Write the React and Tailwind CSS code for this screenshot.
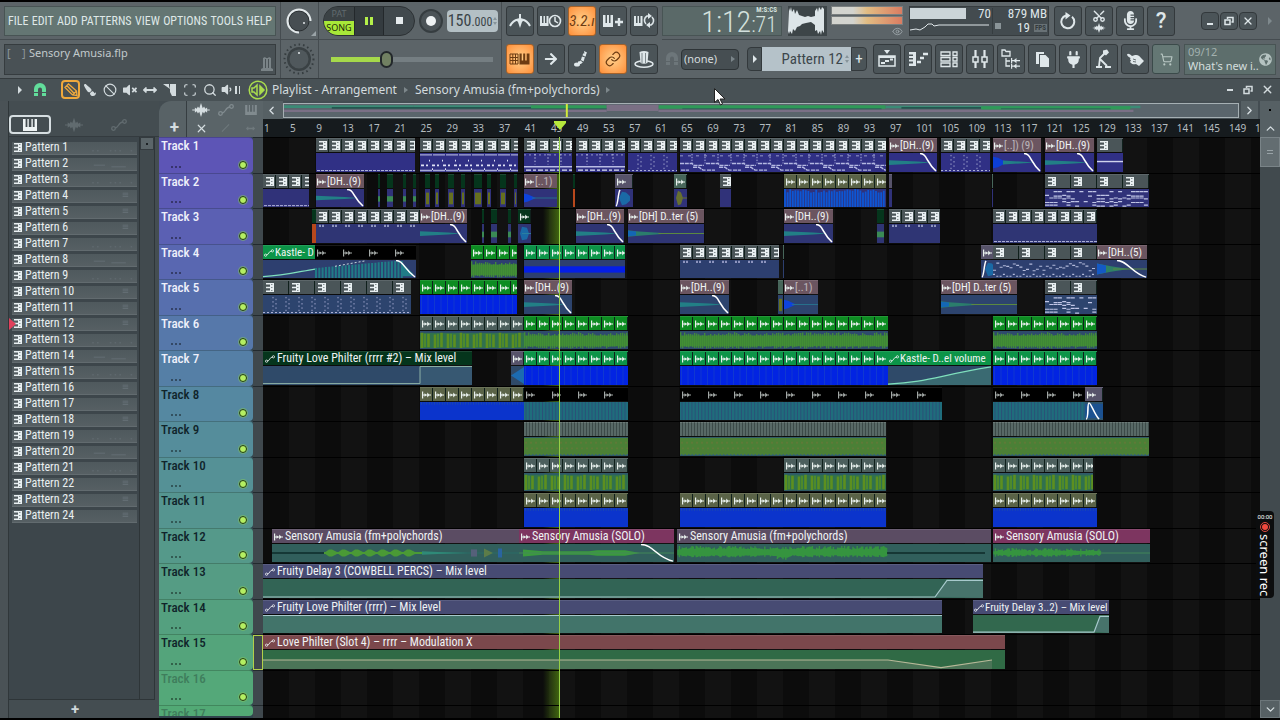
import React from "react";
import { Ban, Search, Scan, Link, ShoppingCart, Scissors, X, ChevronLeft, ChevronRight, ChevronUp, ChevronDown, Eye } from "lucide-react";
import { FaMicrophoneAlt, FaPlug, FaVolumeMute, FaPaintBrush, FaArrowRight, FaArrowsAltH, FaVolumeDown, FaGlobeAmericas } from "react-icons/fa";

const ORIGIN = 263;
const BAR = 6.52;

/* ---------- icons ---------- */
const Piano = ({ className = "h-3 w-3.5" }) => (
  <svg viewBox="0 0 14 12" className={className} fill="currentColor">
    <path d="M0 0h2.600v8h1.800V0h1.400v8h2.600V0h1.400v8h1.800V0H14v12H0z" />
  </svg>
);
const Wave = ({ className = "h-4 w-5" }) => (
  <svg viewBox="0 0 20 16" className={className} fill="currentColor">
    <path d="M0 7.500h3V5l2 1.500L6.500 4 8 6l2-6 2 6 1.500-2L15 6.500 17 5v2.500h3v1h-3V11l-2-1.500-1.500 2.500L12 10l-2 6-2-6-1.500 2L5 9.500 3 11V8.500H0z" />
  </svg>
);
const Auto = ({ className = "h-3 w-4" }) => (
  <svg viewBox="0 0 16 12" className={className} fill="none" stroke="currentColor" strokeWidth="1.300">
    <circle cx="2.500" cy="9.500" r="1.800" />
    <circle cx="13.500" cy="2.500" r="1.800" />
    <path d="M4 9c4 0 3-6 8-6" />
  </svg>
);
const PatIcon = () => (
  <svg viewBox="0 0 9 9" className="h-[9px] w-[9px] shrink-0">
    <path d="M1 0h8v9H1V7.500h4V5.200H1V3.800h4V1.500H1z" fill="#e9f0f2" />
    <path d="M6 1.500h1.500M6 4.500h1.500M6 7.500h1.500" stroke="#6d787c" strokeWidth="0.800" />
  </svg>
);
const AudIcon = () => (
  <svg viewBox="0 0 9 8" className="h-2 w-[9px] shrink-0" fill="#e9f1ee">
    <path d="M0 0.500h1.200v7H0zM1 3.500h8v1H1zM2.500 2.200L5 4 2.500 5.800zM5.200 1.500L7.700 4 5.200 6.500z" />
  </svg>
);
const Pencil = () => (
  <svg viewBox="0 0 14 14" className="h-3.5 w-3.5" fill="none" stroke="currentColor" strokeWidth="1.300">
    <path d="M1 4.500 4.500 1l8 7 .5 4.500-4.500-.5zM3 2.800l7 7.500M8.500 12l4-4" />
  </svg>
);
const Magnet = ({ className = "h-3.5 w-3.5" }) => (
  <svg viewBox="0 0 14 14" className={className} fill="currentColor">
    <path d="M1 9V6a6 6 0 0 1 12 0v3H9V6.500a2 2 0 0 0-4 0V9zM1 10h4v3H1zM9 10h4v3H9z" />
  </svg>
);
const Restore = () => (
  <svg viewBox="0 0 10 10" className="h-2.5 w-2.5" fill="none" stroke="currentColor" strokeWidth="1.500">
    <path d="M1 4h5v4.500H1zM3.500 3V1.500H9V6H7.500" />
  </svg>
);
const Spin = () => (
  <span className="ml-px flex flex-col gap-0.5">
    <span className="border-x-2 border-b-[3px] border-x-transparent border-b-[#87949a]" />
    <span className="border-x-2 border-t-[3px] border-x-transparent border-t-[#87949a]" />
  </span>
);
const glyphs = {
  metro: (
    <>
      <path d="M1 15c2-4 5-6 8-6.500M21 15c-2-4-5-6-8-6.500" fill="none" stroke="currentColor" strokeWidth="2" />
      <path d="M10 3h2v4l3 2-2 2-2 6-2-6-2-2 3-2z" fill="currentColor" />
    </>
  ),
  wait: (
    <>
      <path d="M0 5h2v7h1.500V5H5v7h1.500V5h2v10H0z" fill="currentColor" />
      <circle cx="15" cy="10" r="5.500" fill="none" stroke="currentColor" strokeWidth="1.600" />
      <path d="M15 6v4l3 2" fill="none" stroke="currentColor" strokeWidth="1.500" />
    </>
  ),
  plus: (
    <>
      <path d="M1 4h2.500v8H5V4h2v8h1.500V4H11v12H1z" fill="currentColor" />
      <path d="M13 11h8M17 7v8" stroke="currentColor" strokeWidth="2.400" />
    </>
  ),
  loop: (
    <>
      <path d="M1 5h2v7h1.500V5H6v7h1.500V5h2v10H1z" fill="currentColor" />
      <path d="M13 13a5 5 0 0 1 1-8h2M19 6a5 5 0 0 1-1 8h-2" fill="none" stroke="currentColor" strokeWidth="1.600" />
      <path d="M15 2l4 3-4 3zM17 11l-4 3 4 3z" fill="currentColor" />
    </>
  ),
  keys: (
    <>
      <path d="M1 5h8v10H1zM1 8.500h8M1 11.500h8M3.800 5v10M6.500 5v10" fill="none" stroke="currentColor" strokeWidth="1" />
      <path d="M10.500 4.500h2.200v7h1.500v-7h2v7h1.500v-7h2.800v11h-10z" fill="currentColor" />
    </>
  ),
  slide: (
    <>
      <ellipse cx="6" cy="15.500" rx="3" ry="2" fill="currentColor" />
      <path d="M7 14c6 0 4-6 7-9" fill="none" stroke="currentColor" strokeWidth="3" strokeDasharray="4 1" />
      <path d="M13 2l3 1.500L14 8z" fill="currentColor" />
    </>
  ),
  hat: (
    <>
      <ellipse cx="11" cy="15" rx="9" ry="3.200" fill="none" stroke="currentColor" strokeWidth="1.600" />
      <path d="M6.500 3c3-1.500 6-1.500 9 0l-1 11c-2 1-5 1-7 0z" fill="currentColor" />
      <path d="M9 4v10M12.500 4v10" stroke="#7d878b" strokeWidth="1" />
    </>
  ),
  playlist: (
    <>
      <path d="M3 7h16v10H3z" fill="none" stroke="currentColor" strokeWidth="1.500" />
      <path d="M3 8h16M5 14h4M9 12h4M14 10.500h3" stroke="currentColor" strokeWidth="2" />
      <path d="M8 1h6l-3 4z" fill="currentColor" />
    </>
  ),
  roll: (
    <>
      <path d="M2 3h7v14H2v-2.500h4v-2H2v-2h4v-1.500H2V7h4V5.500H2z" fill="currentColor" />
      <path d="M10 13h4M13 9h4M16 5h5" stroke="currentColor" strokeWidth="2.500" />
    </>
  ),
  rack: <path d="M3 3h9v3.500H3zM3 8.500h9V12H3zM3 14h9v3.500H3zM15 3h4v3.500h-4zM15 8.500h4V12h-4zM15 14h4v3.500h-4z" fill="none" stroke="currentColor" strokeWidth="1.300" />,
  mixer: (
    <>
      <path d="M6.500 1v18M15.500 1v18" stroke="currentColor" strokeWidth="2.200" />
      <path d="M4 8h5v5H4zM13 8h5v5h-5z" fill="#4a5357" stroke="currentColor" strokeWidth="1.500" />
    </>
  ),
  browser: (
    <>
      <path d="M2 1h3l1 1.500h4V7H2zM6 9v8h4M6 12h4" fill="none" stroke="currentColor" strokeWidth="1.300" />
      <path d="M11 9h1.200v2H14l2.500-2v2H20v1.200h-3.500v2L14 12.200h-1.800v2H11zM11 14.800h1.200v1.700H14l2.500-2v2H20v1.200h-3.500v2L14 17.700h-1.800v2H11z" fill="currentColor" />
    </>
  ),
  docs: <path d="M5 3h8v2H8v10H5zM9 6h5.500L18 9.500V18H9z" fill="currentColor" />,
  tempo: (
    <>
      <path d="M10 1.500l4-1 2 3-3 3-3-2z" fill="currentColor" />
      <path d="M12 4 7 9l-1 8M7 10l7 7" fill="none" stroke="currentColor" strokeWidth="1.800" />
      <path d="M3 18h6M12 18h6" stroke="currentColor" strokeWidth="1.800" />
    </>
  ),
  undo: (
    <>
      <path d="M9 4.500a6.500 6.500 0 1 0 6 1.300" fill="none" stroke="currentColor" strokeWidth="2" />
      <path d="M8.500 1v7.500L13.500 4.500z" fill="currentColor" />
    </>
  ),
  touch: (
    <>
      <path d="M3 5.500c1-1.500 2.500-.5 5 1.500l3-1c3-.5 5 1 6 3l3 3-5 5-3-2c-2 .5-4 .3-5-1l-1-1 1-1.500-1-1 .5-1.500C5 8 3 7 3 5.500z" fill="currentColor" />
      <path d="M9 10l3 1M9 12.500l3 .5" stroke="#4b5458" strokeWidth="0.800" />
    </>
  ),
};
const G = ({ name }) => (
  <svg viewBox="0 0 22 20" className="h-5 w-[22px]">
    {glyphs[name]}
  </svg>
);

const Tool = ({ label, on, dim, children }) => (
  <button
    aria-label={label}
    className={
      "flex h-[30px] w-7 shrink-0 items-center justify-center rounded-[3px] border " +
      (on
        ? "border-[#a5622a] bg-radial from-[#ffd08a] to-[#ff8e35] text-[#6d3c12]"
        : dim
          ? "border-[#3b4a4a] bg-[#647774] text-[#b9c8c4]"
          : "border-[#33393c] bg-[#4b5458] text-[#dfe7ea]")
    }
  >
    {children}
  </button>
);

/* ---------- header ---------- */
const Header = () => (
  <header className="flex shrink-0 border-t-2 border-b border-t-black border-b-[#353b3e] bg-[#5c6468] font-['Roboto_Condensed','Roboto',sans-serif]">
    <div className="flex w-[281px] shrink-0 flex-col border-r border-[#454c50]">
      <div className="flex h-[38px] items-center border-b border-[#454c50] px-1">
        <nav className="flex h-[30px] w-full items-center justify-between border border-[#485454] bg-[#647673] px-[3px] text-[12px] text-[#dfe8e7]">
          {["FILE", "EDIT", "ADD", "PATTERNS", "VIEW", "OPTIONS", "TOOLS", "HELP"].map((m) => (
            <button key={m} className="shrink-0">{m}</button>
          ))}
        </nav>
      </div>
      <div className="flex h-[38px] items-center px-1">
        <div className="flex h-[31px] w-full items-start border border-[#363c3f] bg-[#495155] pl-0.5 font-['Noto_Sans',sans-serif] text-[11px] leading-4 text-[#c1c9cc]">
          <span className="w-[22px] whitespace-pre text-[#8d979b]">{"[    ]"}</span>
          <span>Sensory Amusia.flp</span>
          <svg viewBox="0 0 12 14" className="mt-3 mr-0.5 ml-auto h-3.5 w-3" fill="#7a8387">
            <path d="M2 1l2-1 1 1h2l1-1 2 1v10l2 1v2H0v-2l2-1z" />
            <path d="M4.500 2v9M7.500 2v9" stroke="#495155" />
          </svg>
        </div>
      </div>
    </div>
    <div className="flex w-[38px] shrink-0 flex-col border-r border-[#454c50]">
      <div className="flex h-[38px] items-center justify-center border-b border-[#454c50]">
        <svg viewBox="0 0 34 34" className="h-[34px] w-[34px]">
          <circle cx="16" cy="17" r="10" fill="#474e52" stroke="#2b3033" />
          <path d="M16 28.500A11.500 11.500 0 1 1 27.500 17" fill="none" stroke="#e3e9eb" strokeWidth="2" />
          <circle cx="21" cy="19" r="1" fill="#e3e9eb" />
          <path d="M33 27v5h-5z" fill="#9aa3a7" />
        </svg>
      </div>
      <div className="flex h-[38px] items-center justify-center">
        <svg viewBox="0 0 34 34" className="h-[34px] w-[34px]">
          <circle cx="16" cy="17" r="14.500" fill="none" stroke="#353c3f" strokeWidth="2" strokeDasharray="1.500 3" />
          <circle cx="16" cy="17" r="12" fill="#3a4144" />
          <circle cx="16" cy="17" r="9.500" fill="#50585c" />
          <circle cx="16" cy="11" r="1" fill="#e3e9eb" />
        </svg>
      </div>
    </div>
    <div className="flex w-[183px] shrink-0 flex-col border-r border-[#454c50]">
      <div className="flex h-[38px] items-center border-b border-[#454c50] pl-1">
        <div className="flex h-[30px] w-[92px] overflow-hidden rounded-[15px] border border-[#2c3134] bg-[#41494d]">
          <button className="flex w-[30px] flex-col text-center font-['Noto_Sans',sans-serif] text-[9px] leading-[14px]">
            <span className="bg-[#3b4245] text-[#606a6e]">PAT</span>
            <span className="flex-1 bg-[#a8e838] text-[#1d2a08]">SONG</span>
          </button>
          <button aria-label="Pause" className="flex w-[30px] items-center justify-center gap-0.5 border-x border-[#23282b] bg-[#343b3f]">
            <span className="h-2 w-[3px] bg-[#b4ef4a]" />
            <span className="h-2 w-[3px] bg-[#b4ef4a]" />
          </button>
          <button aria-label="Stop" className="flex flex-1 items-center justify-center">
            <span className="h-[7px] w-[7px] bg-[#e6ecee]" />
          </button>
        </div>
        <button aria-label="Record" className="ml-1 flex h-6 w-6 items-center justify-center rounded-full border-2 border-[#363d40] bg-[#4b5357]">
          <span className="h-2.5 w-2.5 rounded-full bg-[#eef2f3]" />
        </button>
        <button aria-label="Tempo" className="ml-1 flex h-[22px] w-[51px] items-center justify-center rounded bg-[#b4c0c5] text-[#3b4448]">
          <span className="flex items-baseline">
            <span className="text-[16px] leading-[22px]">150</span>
            <span className="text-[12px]">.000</span>
          </span>
          <Spin />
        </button>
      </div>
      <div className="flex h-[38px] items-center pl-3">
        <input
          type="range"
          aria-label="Main volume"
          defaultValue="33"
          className="h-[5px] w-[162px] appearance-none bg-linear-to-r from-[#a6d94b] from-33% to-[#757e82] to-33% [&::-webkit-slider-thumb]:h-[17px] [&::-webkit-slider-thumb]:w-[13px] [&::-webkit-slider-thumb]:appearance-none [&::-webkit-slider-thumb]:rounded-full [&::-webkit-slider-thumb]:border-2 [&::-webkit-slider-thumb]:border-[#23282b] [&::-webkit-slider-thumb]:bg-[#718062]"
        />
      </div>
    </div>
    <div className="grid shrink-0 grid-cols-5 grid-rows-2 items-center gap-x-[3px] px-1">
      <Tool label="Metronome"><G name="metro" /></Tool>
      <Tool label="Wait for input"><G name="wait" /></Tool>
      <Tool label="Countdown" on><span className="text-[15px] italic">3.2.ı</span></Tool>
      <Tool label="Overdub"><G name="plus" /></Tool>
      <Tool label="Loop recording"><G name="loop" /></Tool>
      <Tool label="Typing keyboard" on><G name="keys" /></Tool>
      <Tool label="Step"><FaArrowRight size={14} /></Tool>
      <Tool label="Slide"><G name="slide" /></Tool>
      <Tool label="Link" on><Link size={16} strokeWidth={1.8} /></Tool>
      <Tool label="Hat"><G name="hat" /></Tool>
    </div>
    <div className="flex min-w-0 flex-1 flex-col">
      <div className="flex h-[38px] items-center border-b border-[#454c50]">
        <div className="flex h-[30px] w-[120px] shrink-0 items-start justify-end border border-[#485454] bg-[#5a6968] pr-1 text-[#d3e0dd]">
          <span className="text-[30px] leading-[29px] font-light">1:12</span>
          <span className="flex flex-col items-end">
            <span className="text-[7px] leading-[7px] font-bold">M:S:CS</span>
            <span className="text-[22px] leading-[22px] font-light">:71</span>
          </span>
        </div>
        <svg viewBox="0 0 39 30" className="ml-1.5 h-[30px] w-[39px] shrink-0 bg-[#3d4548]">
          <path d="M1 2l1 3 1-4 1 5 2-3 1 5 2-4 2 5 3 1 3 1 3-1 3 1 4-1V5l2-3 1 4 1-5 2 3 1-3 2 2v24l-2-3-1 5-1-4-2 3-1-4-2 1v-6l-4-3-5 1-4 1-2 2-3 1-2 4-2-2-1 5-2-3-1 3-1-3z" fill="#dde5e8" />
        </svg>
        <div className="ml-1 flex w-[72px] shrink-0 flex-col gap-px self-start pt-1">
          <span className="h-[9px] border border-[#7a7f7f] bg-linear-to-r from-[#d3d4cf] from-30% via-[#e2bd83] to-[#d97c62]" />
          <span className="h-[9px] border border-[#7a7f7f] bg-linear-to-r from-[#d3d4cf] from-30% via-[#e2bd83] to-[#d97c62]" />
          <Eye size={11} className="ml-auto text-[#9aa3a7]" />
        </div>
        <div className="ml-1.5 flex h-[30px] w-[140px] shrink-0 border border-[#363c3f] bg-[#434b4f] text-[13px] leading-[14px] whitespace-nowrap text-[#dfe6e9]">
          <svg viewBox="0 0 84 28" className="h-7 w-[84px] shrink-0">
            <rect y="1" width="56" height="11" fill="#cbd4d8" />
            <path d="M0 23l6-1 4 1 5-3 3-3h4l2 2 5-1h50" fill="none" stroke="#dfe6e9" />
            <rect x="82" y="1" width="1" height="26" fill="#363d40" />
          </svg>
          <span className="-ml-4 w-4">70</span>
          <span className="mt-4 ml-px h-1.5 w-1.5 bg-[#8a9498]" />
          <span className="ml-auto flex flex-col items-end pr-px">
            <span>879 MB</span>
            <span className="flex items-center gap-1">
              19 <span className="bg-[#697276] px-px text-[7px] leading-2 font-bold text-[#343b3e]">FPS</span>
            </span>
          </span>
        </div>
        <div className="ml-[5px] flex shrink-0 gap-[3px]">
          <Tool label="Undo"><G name="undo" /></Tool>
          <Tool label="Cut">
            <span className="flex flex-col items-center">
              <Scissors size={14} strokeWidth={2.4} className="-rotate-90" />
              <Wave className="h-2.5 w-4" />
            </span>
          </Tool>
          <Tool label="Record audio"><FaMicrophoneAlt size={19} /></Tool>
          <Tool label="Help"><span className="font-['Roboto',sans-serif] text-[22px] leading-6 font-medium">?</span></Tool>
        </div>
        <div className="mr-2 ml-auto flex items-center gap-px text-[#dfe7ea]">
          <button aria-label="Minimize" className="flex h-[18px] w-[18px] items-end justify-center rounded-sm border border-[#33393c] bg-[#4b5458] pb-1"><span className="h-0.5 w-1.5 bg-current" /></button>
          <button aria-label="Restore" className="flex h-[18px] w-[18px] items-center justify-center rounded-sm border border-[#33393c] bg-[#4b5458]"><Restore /></button>
          <button aria-label="Close" className="flex h-[18px] w-[18px] items-center justify-center rounded-sm border border-[#33393c] bg-[#4b5458]"><X size={12} strokeWidth={2.5} /></button>
          <span className="ml-2.5 border-y-4 border-l-4 border-y-transparent border-l-[#7f898d]" />
        </div>
      </div>
      <div className="flex h-[38px] items-center">
        <Magnet className="ml-[3px] h-3.5 w-3.5 shrink-0 text-[#6d767a]" />
        <label className="relative ml-0.5 flex shrink-0 items-center">
          <select aria-label="Channel filter" className="h-[21px] w-[58px] appearance-none rounded-sm border border-[#2e3437] bg-[#464e52] pl-0.5 font-['Noto_Sans',sans-serif] text-[11px] text-[#d5dcdf]">
            <option>(none)</option>
          </select>
          <span className="absolute right-1 border-y-[3px] border-l-4 border-y-transparent border-l-[#7b858a]" />
        </label>
        <button aria-label="Pattern menu" className="ml-2 flex h-6 w-[15px] shrink-0 items-center justify-center rounded-l-sm border border-[#33393c] bg-[#4b5458]">
          <span className="border-y-4 border-l-4 border-y-transparent border-l-[#dfe7ea]" />
        </button>
        <button className="flex h-6 w-[89px] shrink-0 items-center justify-end gap-px bg-[#b5c2c9] pr-0.5 text-[15px] text-[#3d474c]">
          Pattern 12
          <Spin />
        </button>
        <button className="flex h-6 w-4 shrink-0 items-center justify-center rounded-r-sm border border-[#33393c] bg-[#4b5458] text-[15px] text-[#dfe7ea]">+</button>
        <div className="ml-1.5 flex shrink-0 gap-[3px]">
          {["playlist", "roll", "rack", "mixer", "browser", "docs"].map((n) => (
            <Tool key={n} label={n}><G name={n} /></Tool>
          ))}
          <Tool label="plugin"><FaPlug size={17} /></Tool>
          <Tool label="tempo tap"><G name="tempo" /></Tool>
          <Tool label="touch"><G name="touch" /></Tool>
          <Tool label="shop" dim><ShoppingCart size={13} /></Tool>
        </div>
        <a href="#news" className="mr-1 ml-1 flex h-[31px] min-w-0 flex-1 items-center justify-between border border-[#485454] bg-[#5d6e6c] px-[3px] font-['Noto_Sans',sans-serif] text-[11px] leading-[14px]">
          <span className="flex flex-col whitespace-nowrap">
            <span className="text-[#a3b1af]">09/12</span>
            <span className="text-[#d4dedd]">What's new i..</span>
          </span>
          <FaGlobeAmericas size={13} className="shrink-0 text-[#b5c3c1]" />
        </a>
      </div>
    </div>
  </header>
);

const TitleBar = () => (
  <div className="flex h-[22px] shrink-0 items-center bg-[#485155] pr-1.5 pb-px pl-[18px] font-['Noto_Sans',sans-serif] text-[12px] text-[#d3dbde]">
    <span className="border-y-4 border-l-4 border-y-transparent border-l-current" />
    <button aria-label="Snap" className="ml-[11px] text-[#62dd9b]"><Magnet /></button>
    <button aria-label="Draw" className="ml-3.5 flex h-[19px] w-[19px] items-center justify-center rounded border-2 border-[#f0a93c] text-[#f0a93c]"><Pencil /></button>
    <div className="flex items-center">
      {[
        ["Paint", <FaPaintBrush size={12} className="-scale-x-100" />],
        ["Delete", <Ban size={14} strokeWidth={2} />],
        ["Mute", <FaVolumeMute size={14} />],
        ["Slip", <FaArrowsAltH size={14} />],
        ["Slice", <svg viewBox="0 0 14 14" className="h-3.5 w-3.5" fill="currentColor"><path d="M0 1h6v2l1 3zM7 1h6v12H9L7 9z" /></svg>],
        ["Select", <Scan size={14} />],
        ["Zoom", <Search size={14} strokeWidth={2.2} />],
        ["Playback", <span className="flex items-center gap-0.5"><FaVolumeDown size={13} /><span className="h-2 w-0.5 bg-current" /><span className="h-2 w-px bg-current" /></span>],
      ].map(([n, i]) => (
        <button key={n} aria-label={n} className="flex w-5 shrink-0 justify-center">{i}</button>
      ))}
    </div>
    <svg viewBox="0 0 20 20" className="mr-1 ml-2 h-5 w-5 shrink-0" fill="none" stroke="#a9dc4e" strokeWidth="1.500">
      <circle cx="10" cy="10" r="8.800" />
      <path d="M4 8v4h2l3 3V5L6 8z" />
      <path d="M12 6v8l4-4z" fill="#a9dc4e" />
    </svg>
    <span className="whitespace-nowrap">Playlist - Arrangement</span>
    <span className="mx-[7px] border-y-[3px] border-l-4 border-y-transparent border-l-[#7d878b]" />
    <span className="whitespace-nowrap">Sensory Amusia (fm+polychords)</span>
    <span className="ml-1.5 border-y-[3px] border-l-4 border-y-transparent border-l-[#7d878b]" />
    <div className="ml-auto flex items-center gap-2">
      <button aria-label="Minimize playlist" className="flex h-3 w-2 items-center"><span className="h-0.5 w-1.5 bg-current" /></button>
      <button aria-label="Restore playlist"><Restore /></button>
      <button aria-label="Close playlist"><X size={13} strokeWidth={2.5} /></button>
    </div>
  </div>
);

/* ---------- pattern browser ---------- */
const Browser = () => (
  <aside className="flex w-[151px] shrink-0 flex-col border-l border-[#30373a] bg-[#444d51]">
    <div className="flex h-9 items-center border-b border-[#343b3f] pt-3">
      <button aria-label="Patterns" className="flex h-[19px] w-[42px] items-center justify-center rounded border-2 border-[#d6dee1] text-[#eef3f4]"><Piano /></button>
      <button aria-label="Audio clips" className="ml-3.5 text-[#616b6f]"><Wave className="h-4 w-[18px]" /></button>
      <button aria-label="Automation" className="ml-7 text-[#616b6f]"><Auto /></button>
    </div>
    <div className="flex min-h-0 flex-1">
      <ul className="flex min-w-0 flex-1 flex-col border-b border-[#2e3538] bg-[#3d464b] pt-[3px] pr-0.5 pl-[3px]">
        {Array.from({ length: 24 }, (_, i) => (
          <li key={i} className="flex h-4 shrink-0 items-center">
            <button className="relative flex h-[13px] w-full items-center gap-[3px] border-b border-[#626b6f] bg-linear-to-b from-[#4f595d] to-[#565f63] pl-px font-['Roboto_Condensed','Roboto',sans-serif] text-[12px] leading-[13px] text-[#e9eff1]">
              {i === 11 && <span className="absolute -left-[3px] border-y-[6px] border-l-[7px] border-y-transparent border-l-[#e0405c]" />}
              <PatIcon />
              <span>Pattern {i + 1}</span>
              <svg viewBox="0 0 60 10" className="ml-auto h-2.5 w-12" fill="#69737a">
                {i % 6 < 3 ? (
                  <path d={i % 2 ? "M6 6h14v1H6zM28 8h18v1H28z" : "M4 8h2v1H4zM10 8h2v1h-2zM26 8h2v1h-2zM32 8h2v1h-2zM38 8h2v1h-2zM52 8h2v1h-2z"} />
                ) : (
                  <path d="M42 1h7v1h-7zM42 3h7v1h-7zM42 5h7v1h-7z" />
                )}
              </svg>
            </button>
          </li>
        ))}
      </ul>
      <div className="flex w-4 shrink-0 flex-col border-x border-b border-[#2e3538] bg-[#414a4e]">
        <span className="flex h-[13px] items-center justify-center border border-[#343b3f] bg-[#5b6569]"><span className="h-0.5 w-0.5 bg-[#1d2225]" /></span>
      </div>
      <div className="w-1 shrink-0" />
    </div>
    <button aria-label="Add pattern" className="flex h-[18px] items-center justify-center pr-[18px] font-['Roboto',sans-serif] text-[15px] font-bold text-[#cfd7da]">+</button>
  </aside>
);

/* ---------- clip drawings ---------- */
const rnd = (n) => {
  const v = Math.sin(n * 12.9898) * 43758.5453;
  return v - Math.floor(v);
};
const range = (a, b, s) => {
  const out = [];
  for (let x = a; x < b; x += s) out.push(x);
  return out;
};
const arts = {
  bottom: (w) => <path d={`M1 18.500H${w}`} stroke="#b9bce0" strokeDasharray="3 1" />,
  ticks: (w) => <path d={range(3, w - 5, 13).map((x) => `M${x} 2h2M${x + 3} 2h2`).join("")} stroke="#8d94be" strokeWidth="2.500" />,
  notesA: (w) => (
    <>
      <path d={`M0 2H${w}M0 18.500H${w}`} stroke="#a6a9d6" strokeWidth="1.500" strokeDasharray="12 1" />
      <path d={`M1 13H${w}`} stroke="#dfe2f6" strokeWidth="2" strokeDasharray="3 2 2 4" />
      <path d={`M9 8H${w}M12 17H${w}`} stroke="#dfe2f6" strokeWidth="2" strokeDasharray="1 12" />
    </>
  ),
  notesB: (w) => (
    <>
      <path d={`M0 2H${w}`} stroke="#9a9dcc" strokeDasharray="2 3" />
      <path d={range(11, w, 13).map((x) => `M${x} 1V12`).join("")} stroke="#c7cae8" strokeDasharray="1.500 2" />
      <path d={`M0 14.500H${w}`} stroke="#b9bce4" strokeWidth="1.500" />
      <path d={`M2 18H${w}`} stroke="#dfe2f6" strokeWidth="1.500" strokeDasharray="5 2 3 2" />
    </>
  ),
  dots: (w) => (
    <>
      <path d={range(10, w, 13).map((x) => `M${x} 2V17M${x + 3} 4V15`).join("")} stroke="#a3a8d0" strokeDasharray="1.500 3" />
      <path d={`M0 18.500H${w}`} stroke="#b9bce0" strokeDasharray="2 2" />
    </>
  ),
  notesC: (w) => (
    <>
      <path d={range(0, w, 26).map((x) => `M${x} 11h12l2 2h10M${x + 13} 15h6l4 3h3M${x + 1} 18h8`).join("")} fill="none" stroke="#b4b8e2" strokeWidth="1.500" strokeDasharray="4 0.800" />
      <path d={range(12, w, 13).map((x) => `M${x} 1V11`).join("")} stroke="#b4b8e2" strokeDasharray="1.500 1.500" />
      <path d={`M0 3H${w}`} stroke="#9a9dcc" strokeDasharray="3 5" />
    </>
  ),
  scatter: (w) => <path d={range(0, w - 3, 3.3).map((x, i) => `M${x.toFixed(1)} ${(3 + rnd(i + 1) * 9).toFixed(1)}h3M${x.toFixed(1)} ${i % 3 ? 18 : 16}h2`).join("")} stroke="#b3bada" strokeWidth="1.200" />,
  dense: (w) => <path d={range(0, w - 4, 4.3).map((x, i) => [3, 7, 10, 14, 18].filter((_, k) => rnd(i * 7 + k) > 0.35).map((y, k) => `M${x.toFixed(1)} ${y + (k % 2)}h4`).join("")).join("")} stroke="#c0c5e6" strokeWidth="1.300" />,
  line: (w) => <path d={`M0 9H${w}`} stroke="#cfd2ec" strokeWidth="1.500" />,
  blue: (w) => (
    <>
      <rect width={w} height="20" fill="#0224e2" />
      <path d={range(1.5, w, 6.5).map((x) => `M${x.toFixed(1)} 0V20`).join("")} stroke="#1b46c4" strokeWidth="0.600" />
    </>
  ),
  blue2: (w) => (
    <>
      <rect width={w} height="20" fill="#0b34cc" />
      <path d={range(1.5, w, 2.6).map((x) => `M${x.toFixed(1)} 0V3`).join("")} stroke="#204fa8" strokeWidth="0.800" />
    </>
  ),
  blueband: (w) => <rect y="7" width={w} height="7" fill="#041ee6" />,
  bluestripe: (w) => <path d={range(1, w, 2.6).map((x, i) => `M${x} ${(rnd(i) * 4).toFixed(1)}V20`).join("")} stroke="#0d56d4" strokeWidth="1.800" />,
  teal: (w) => (
    <>
      <rect width={w} height="20" fill="#1f6d7c" />
      <path d={range(2, w, 3.3).map((x) => `M${x.toFixed(1)} 0V20`).join("")} stroke="#2b5078" strokeWidth="1" />
    </>
  ),
  tealrise: (w) => (
    <>
      <path d={range(1, w - 14, 3.3).map((x) => `M${x.toFixed(1)} ${Math.max(1, 9 - x * 0.1).toFixed(1)}V20`).join("")} stroke="#207c87" strokeWidth="2" />
      <path d="M20 7L50 1" stroke="#cfe0e0" strokeDasharray="2 2" />
      <path d={`M${w - 14} 3L${w - 3} 15V18H${w - 14}z`} fill="#207c87" />
      <path d={`M${w - 20} 0.500c7 0 8 9 19 18.500`} fill="none" stroke="#fff" strokeWidth="1.500" />
    </>
  ),
  green: (w) => (
    <>
      <rect y="5" width={w} height="12" fill="#3c8338" />
      <path d={range(0.7, w, 2).map((x, i) => `M${x.toFixed(1)} ${(1.5 + rnd(i) * 4).toFixed(1)}V${(19.5 - rnd(i + 50) * 3).toFixed(1)}`).join("")} stroke="#438f36" strokeWidth="1.300" />
    </>
  ),
  olive: (w) => (
    <>
      <rect y="2" width={w} height="17" fill="#30714e" />
      <path d={range(2, w, 6.5).map((x, i) => `M${x} ${2 + (i % 3)}V${19 - (i % 2)}`).join("")} stroke="#5d8f1f" strokeWidth="2.600" />
      <path d={range(5, w, 13).map((x) => `M${x} 3V18`).join("")} stroke="#4d8a2c" strokeWidth="2" />
    </>
  ),
  mixed: (w) => (
    <>
      <rect y="1" width={w} height="18" fill="#4b8036" />
      <path d={`M1 6H${w}M2 12H${w}`} stroke="#5f7a38" strokeWidth="2" strokeDasharray="2 3" />
      <path d={`M1 18.500H${w}`} stroke="#35607a" strokeDasharray="1.500 2" />
    </>
  ),
  dh: (w) => (
    <>
      <path d={`M0 7.500L${w * 0.6} 9 ${w - 6} 10 ${w * 0.6} 11 0 12.500z`} fill="#227f86" />
      <path d={`M${w - 17} 0.500c7 0 6 9 16 18.500`} fill="none" stroke="#fff" strokeWidth="1.600" />
    </>
  ),
  dhblue: (w) => (
    <>
      <path d="M0 4l5 1 5 3 8 2-8 2-5 3-5 1z" fill="#0d3fd6" />
      <path d={`M10 8L${w - 6} 10 10 12z`} fill="#227f86" />
      <path d={`M${w - 17} 0.500c7 0 6 9 16 18.500`} fill="none" stroke="#fff" strokeWidth="1.600" />
    </>
  ),
  dh5: (w) => (
    <>
      <path d={`M0 6.500l8 1L${w * 0.45} 9.500H${w}v1H${w * 0.45}L8 12.500 0 13.500z`} fill="#2b7d6c" />
      <path d="M0 7l8 1v4l-8 1z" fill="#1467b5" />
      <path d={`M${w * 0.4} 10H${w}`} stroke="#5d8a3f" />
    </>
  ),
  dh5fade: (w) => (
    <>
      <path d={`M0 4l14 3L${w - 18} 10 14 13 0 16z`} fill="#2f8066" />
      <path d="M0 4l9 2v8l-9 2z" fill="#1459c5" />
      <path d={`M16 10H${w}`} stroke="#5d8a3f" />
      <path d={`M${w - 30} 0.500c10 0 16 15 29 18.500`} fill="none" stroke="#fff" strokeWidth="1.600" />
    </>
  ),
  blip: (w) => (
    <>
      <path d="M0 5l4 1 8 4-8 4-4 1z" fill="#0e43dc" />
      <path d={`M8 10H${w}`} stroke="#27708c" />
    </>
  ),
  blob: (w) => (
    <>
      <path d="M2 10l2-7 5 1 2 6-2 6-5 1z" fill="#1a6aa6" />
      <path d={`M4 10H${w}`} stroke="#2b7fa0" />
    </>
  ),
  blobin: () => (
    <>
      <path d="M4 10l3-7 4 1 4 4v5l-4 4-4 1z" fill="#1a6aa6" />
      <path d="M1 19C3 18 3 4 5 1" fill="none" stroke="#fff" strokeWidth="1.500" />
    </>
  ),
  oliveblob: () => <path d="M2 10l2-8 3 2 2 6-2 7-3 1zM8 9.500h5v1H8z" fill="#67702f" />,
  tri: (w) => <path d={`M0 10L${w} 1v18z`} fill="#1c6bb0" />,
  spike: (w) => (
    <>
      <rect y="2" width={w} height="16" fill="#1b5190" />
      <path d="M1 19C4 19 2 1 4 1s5 12 10 18" fill="none" stroke="#fff" strokeWidth="1.600" />
    </>
  ),
  sliver: (w) => <rect y="8" width={w} height="6" fill="#3a8a55" />,
  sliverO: (w) => <path d={`M1 4H${w - 1}V17H1z`} fill="#66701f" />,
  orange: (w) => <rect width={w} height="20" fill="#b8481c" />,
  rise: (w) => <path d={`M0 18.500C${w * 0.4} 17 ${w * 0.6} 14 ${w} 10`} fill="none" stroke="#7fe0bd" strokeWidth="1.400" />,
  rise2: (w) => (
    <>
      <path d={`M0 19C40 17 50 10 ${w} 1V20H0z`} fill="#3a6a72" />
      <path d={`M0 19C40 17 50 10 ${w} 1`} fill="none" stroke="#7fe0bd" strokeWidth="1.400" />
    </>
  ),
  step: (w) => (
    <>
      <rect x="157" width={w - 157} height="20" fill="#375872" />
      <path d={`M0 18.500H157V0.500H${w}`} fill="none" stroke="#8fb3a8" />
    </>
  ),
  up13: (w) => (
    <>
      <path d={`M${w - 48} 19L${w - 36} 1.500H${w}V20z`} fill="#47736b" />
      <path d={`M0 19H${w - 48}L${w - 36} 1.500H${w}`} fill="none" stroke="#a7c9cc" strokeWidth="1.200" />
    </>
  ),
  full14: (w) => (
    <>
      <rect width={w} height="20" fill="#42746a" />
      <path d={`M0 0.500H${w}`} stroke="#a7c9cc" strokeWidth="1.200" />
    </>
  ),
  up14: (w) => (
    <>
      <path d={`M${w - 15} 19L${w - 9} 1.500H${w}V20z`} fill="#47736b" />
      <path d={`M0 19H${w - 15}L${w - 9} 1.500H${w}`} fill="none" stroke="#a7c9cc" strokeWidth="1.200" />
    </>
  ),
  mod: () => (
    <>
      <path d="M0 10.500H625L678 18.500 729 10.500V20H0z" fill="#4b7457" />
      <path d="M0 10.500H625L678 18.500 729 10.500" fill="none" stroke="#b7b898" strokeWidth="1.200" />
    </>
  ),
  poly1: (w) => (
    <>
      <path d={`M0 10H${w}`} stroke="#2b6d68" />
      <path d="M0 10H52" stroke="#0e2a29" strokeWidth="1.500" />
      <path d={range(52, 140, 13).map((x) => `M${x} 10l5-4h3l5 3v2l-5 3h-3z`).join("")} fill="#4a9a35" />
      <path d="M52 9h98v2H52z" fill="#4a9a35" />
      <path d="M150 8l16 1 30 1-30 1-16 1z" fill="#2f8a78" />
      <path d="M199 6h6v8h-6z" fill="#55607a" />
      <path d="M212 5l9 5-9 5z" fill="#5c7c48" />
      <path d="M226 5h4v10h-4z" fill="#2a64a0" />
    </>
  ),
  solo1: (w) => (
    <>
      <path d="M4 6l20 2h46l8-1h28l15 3-15 3H78l-8-1H24L4 14z" fill="#3b9a3e" />
      <path d={`M0 10H${w}`} stroke="#44885a" />
      <path d={`M${w - 33} 0.500c12 0 16 15 32 18.500`} fill="none" stroke="#fff" strokeWidth="1.600" />
    </>
  ),
  poly2: (w) => (
    <>
      <path d={range(1, 210, 1.4).map((x, i) => { const a = 4 + rnd(i) * 4; return `M${x.toFixed(1)} ${(10 - a).toFixed(1)}V${(10 + a * (x > 100 && x < 112 ? 1.1 : 0.6)).toFixed(1)}`; }).join("")} stroke="#35943f" strokeWidth="1.400" />
      <path d={`M210 10H${w - 6}`} stroke="#0e2a29" strokeWidth="1.500" />
    </>
  ),
  solo2: (w) => (
    <>
      <path d={range(1, 108, 1.4).map((x, i) => { const a = 2 + rnd(i) * 3.5; return `M${x.toFixed(1)} ${(10 - a).toFixed(1)}V${(10 + a * 0.8).toFixed(1)}`; }).join("")} stroke="#35943f" strokeWidth="1.400" />
      <path d={`M106 10H${w}`} stroke="#44885a" />
    </>
  ),
};

const tone = {
  pat: "bg-[#4a5558]",
  dh: "bg-[#6b5560]",
  lav: "bg-[#57536a]",
  deep: "bg-[#05351c]",
  g1: "bg-[#0d8c22]",
  g2: "bg-[#0c9448]",
  black: "bg-black",
  olive: "bg-[#5a6347]",
  slate: "bg-[#4c5f5d]",
  moss: "bg-[#47665a]",
  poly: "bg-[#5b4c63]",
  solo: "bg-[#7d3560]",
  indigo: "bg-[#474b73]",
  maroon: "bg-[#7b484c]",
  ribs: "bg-[repeating-linear-gradient(90deg,#586966_0_2px,#3c4a48_2px_3px)]",
};

/* clip: [start, end, header tone, artwork, {step, label, icon, small, dim}] */
const P = (a, b, art, step = 13.04) => [a, b, "pat", art, { step, icon: "pat" }];
const A = (a, b, t, art, step = 13.04) => [a, b, t, art, { step, icon: "aud" }];
const D = (a, b, label = "[DH..(9)", art = "dh", dim) => [a, b, "dh", art, { label, icon: "aud", dim, small: true }];
const S = (a, b, t = "deep", art = "sliver") => [a, b, t, art, {}];
const U = (a, b, t, art, label, small) => [a, b, t, art, { label, icon: "auto", small }];
const L = (a, b, t, art, label) => [a, b, t, art, { label, icon: "aud" }];

const tracks = [
  { head: "bg-[#5d55b6]", body: "bg-[#303085]", clips: [P(316, 415, "bottom"), P(420, 518, "notesA"), P(524, 572, "notesB"), P(576, 625, "notesB"), P(628, 677, "dots"), P(680, 886, "notesC"), D(889, 937), P(941, 990, "dots"), D(993, 1041, "[..]) (9)", "dhblue", true), D(1045, 1094), P(1097, 1123, "line", 26.08)] },
  { head: "bg-[#5c5ab5]", body: "bg-[#303279]", clips: [P(263, 309, "bottom"), D(316, 364), S(378, 380), S(387, 393), S(403, 406), S(413, 416), ...[[425, 430], [435, 439], [448, 454], [461, 465], [474, 482], [487, 491], [500, 506], [514, 517]].map(([a, b]) => S(a, b, "deep", "sliverO")), D(524, 557, "[..1)", "blip", true), S(573, 575, "deep", "orange"), A(615, 633, "lav", "blobin", 18), A(674, 687, "moss", "oliveblob"), P(720, 731, null), A(784, 886, "olive", "bluestripe"), S(889, 892, "lav", null), S(992, 993, "moss", null), P(1045, 1149, "dense", 26.08)] },
  { head: "bg-[#5b60b3]", body: "bg-[#2f3574]", clips: [S(312, 316, "deep", "orange"), P(316, 420, "ticks"), D(420, 467), S(482, 484), S(491, 497), S(508, 511), A(518, 531, "deep", "blob"), D(576, 624), D(628, 704, "[DH] D..ter (5)", "dh5"), D(784, 833), S(877, 884), P(889, 940, "ticks"), P(993, 1097, "bottom")] },
  { head: "bg-[#5967b1]", body: "bg-[#2d3f6f]", clips: [U(263, 315, "g2", "rise", "Kastle- D", true), A(315, 416, "black", "tealrise", 26.08), A(471, 517, "g1", "green"), A(524, 625, "g2", "blueband"), P(680, 779, "ticks"), S(783, 784, "moss", null), A(981, 993, "lav", "blobin", 18), P(993, 1097, "scatter", 26.08), D(1097, 1147, "[DH..(5)", "dh5fade")] },
  { head: "bg-[#576fae]", body: "bg-[#2d446e]", clips: [P(263, 411, "dots", 26.08), A(420, 517, "g1", "blue"), D(524, 572), D(680, 729), S(778, 783, "moss", "sliverO"), D(784, 818, "[..1)", "blip", true), D(941, 1017, "[DH] D..ter (5)", "dh5"), P(1045, 1097, "dense", 26.08)] },
  { head: "bg-[#5678aa]", body: "bg-[#2f4b6c]", clips: [A(420, 524, "slate", "olive"), A(524, 628, "g1", "green"), A(680, 888, "g1", "green"), A(993, 1097, "g1", "green")] },
  { head: "bg-[#557fa6]", body: "bg-[#2f4a69]", clips: [U(263, 472, "deep", "step", "Fruity Love Philter (rrrr #2) – Mix level"), A(511, 524, "lav", "tri"), A(524, 628, "g2", "blue"), A(680, 888, "g2", "blue"), U(888, 991, "g2", "rise2", "Kastle- D..el volume", true), A(993, 1097, "g2", "blue")] },
  { head: "bg-[#5588a1]", body: "bg-[#2f5369]", clips: [A(420, 524, "olive", "blue2"), A(524, 628, "black", "teal", 26.08), A(680, 942, "black", "teal", 26.08), A(993, 1085, "black", "teal", 26.08), A(1085, 1103, "lav", "spike", 18)] },
  { head: "bg-[#558d9b]", body: "bg-[#2f5a69]", clips: [S(524, 628, "ribs", "mixed"), S(680, 886, "ribs", "mixed"), S(993, 1149, "ribs", "mixed")] },
  { head: "bg-[#559196]", body: "bg-[#2f5a69]", clips: [A(524, 628, "slate", "olive"), A(784, 886, "slate", "olive"), A(993, 1093, "slate", "olive")] },
  { head: "bg-[#559590]", body: "bg-[#2f5a69]", clips: [A(524, 628, "olive", "blue2"), A(680, 886, "olive", "blue2"), A(993, 1097, "olive", "blue2")] },
  { head: "bg-[#55998a]", body: "bg-[#315f5c]", clips: [L(272, 519, "poly", "poly1", "Sensory Amusia (fm+polychords)"), L(519, 674, "solo", "solo1", "Sensory Amusia (SOLO)"), L(677, 991, "poly", "poly2", "Sensory Amusia (fm+polychords)"), L(993, 1150, "solo", "solo2", "Sensory Amusia (SOLO)")] },
  { head: "bg-[#559c84]", body: "bg-[#326455]", clips: [U(263, 983, "indigo", "up13", "Fruity Delay 3 (COWBELL PERCS) – Mix level")] },
  { head: "bg-[#54a07f]", body: "bg-[#32684e]", clips: [U(263, 942, "indigo", "full14", "Fruity Love Philter (rrrr) – Mix level"), U(973, 1109, "indigo", "up14", "Fruity Delay 3..2) – Mix level", true)] },
  { head: "bg-[#54a47b]", body: "bg-[#306a45]", clips: [U(263, 1005, "maroon", "mod", "Love Philter (Slot 4) – rrrr – Modulation X")] },
  { head: "bg-[#54a879]", body: "", clips: [] },
  { head: "bg-[#52a975]", body: "", clips: [] },
];

const rowHeight = (i) => (i === 16 ? "h-[11px] overflow-hidden" : i % 2 ? "h-[35px]" : "h-9");

const Clip = ({ data, body }) => {
  const [a, b, t, art, o] = data;
  const w = b - a;
  const cells = o.step ? range(0, w - 2, o.step) : [];
  return (
    <div className="absolute top-0 bottom-px flex flex-col overflow-hidden" style={{ left: a - ORIGIN, width: w }}>
      <div className={"flex h-3.5 shrink-0 items-center overflow-hidden border-t border-white/10 " + tone[t]}>
        {cells.map((x) => (
          <span
            key={x}
            className={"flex h-full shrink-0 items-center pl-0.5 " + (t === "black" ? "opacity-70" : "border-r border-[#10201c]")}
            style={{ width: o.step }}
          >
            {o.icon === "pat" ? <PatIcon /> : <AudIcon />}
          </span>
        ))}
        {o.label && (
          <span
            className={
              "flex shrink-0 items-center font-['Roboto_Condensed','Roboto',sans-serif] leading-[13px] whitespace-nowrap text-[#f0f3f4] " +
              (o.small ? "gap-px pl-px text-[11px]" : "gap-0.5 pl-0.5 text-[12px]")
            }
          >
            {o.icon === "auto" ? <Auto className="h-2.5 w-2.5" /> : <AudIcon />}
            <span className={o.dim ? "opacity-60" : ""}>{o.label}</span>
          </span>
        )}
      </div>
      <svg viewBox={`0 0 ${w} 20`} preserveAspectRatio="none" className={"mt-px min-h-0 w-full flex-1 " + body}>
        {art && arts[art](w)}
      </svg>
    </div>
  );
};

/* ---------- playlist ---------- */
const Playlist = () => (
  <main className="flex min-w-0 flex-1 flex-col bg-[#434c51]">
    <div className="flex h-9 shrink-0">
      <div className="flex w-[104px] shrink-0 text-[#d5dde0]">
        <button aria-label="Add track" className="flex w-7 items-end justify-center rounded-tl-xl border-r border-[#363d41] bg-[#586266] pl-1 font-['Roboto',sans-serif] text-[17px] leading-5 font-bold">+</button>
        <div className="grid flex-1 grid-cols-3 grid-rows-2 place-items-center bg-[#5a6468] pl-0.5">
          <Wave className="h-3.5 w-[18px]" />
          <Auto className="h-3 w-4 text-[#818b8f]" />
          <Piano className="h-2.5 w-3.5 text-[#818b8f]" />
          <X size={13} strokeWidth={2.2} />
          <span className="h-2.5 w-px rotate-45 bg-[#6f797d]" />
          <FaArrowsAltH size={9} className="text-[#6f797d]" />
        </div>
      </div>
      <div className="flex min-w-0 flex-1 flex-col">
        <div className="flex h-[18px] items-center bg-[#444d52] text-[#d5dde0]">
          <button aria-label="Scroll left" className="flex h-full w-5 shrink-0 items-center justify-center bg-[#566064] pr-1"><ChevronLeft size={13} strokeWidth={2.5} /></button>
          <svg viewBox="0 0 958 15" preserveAspectRatio="none" className="h-[15px] min-w-0 flex-1 border border-[#a5afb3] bg-[#5a656c]">
            <path d="M0 3H130M604 3.500H860" stroke="#3b8b76" strokeWidth="3" />
            <path d="M48 4.500H248M620 4.500H700" stroke="#24564f" strokeWidth="2" />
            <path d="M130 2.500H248" stroke="#3b8b76" strokeWidth="2" />
            <path d="M248 3.500H324M376 3.500H604M700 4.500H850" stroke="#2f9a58" strokeWidth="4" />
            <path d="M0 8H324M376 8H853" stroke="#7a7086" strokeWidth="2.500" />
            <path d="M324 4.500H376" stroke="#7a6f84" strokeWidth="7" />
            <path d="M248 5.500H324M400 5.500H600M720 5.500H830" stroke="#2c6258" />
            <path d="M284 0V15" stroke="#d2ea3a" strokeWidth="2" />
          </svg>
          <button aria-label="Scroll right" className="ml-0.5 flex h-full w-[17px] shrink-0 items-center justify-center bg-[#566064]"><ChevronRight size={13} strokeWidth={2.5} /></button>
          <span className="ml-0.5 flex h-full w-5 shrink-0 items-center justify-center bg-[#566064]"><span className="h-0.5 w-0.5 bg-black" /></span>
        </div>
        <div className="flex h-[18px]">
          <div className="relative min-w-0 flex-1 overflow-hidden bg-[#161b1e] font-['Noto_Sans',sans-serif] text-[10px] leading-[19px] text-[#b5bdc0]">
            {range(1, 154, 4).map((bar) => (
              <span key={bar} className="absolute pl-px" style={{ left: (bar - 1) * BAR }}>{bar}</span>
            ))}
            <svg viewBox="0 0 12 9" className="absolute top-0.5 h-[9px] w-3" fill="#b6e93c" style={{ left: 291 }}>
              <path d="M0 0h12v2L6 9 0 2z" />
            </svg>
          </div>
          <button aria-label="Scroll up" className="flex w-5 shrink-0 items-center justify-center bg-[#566064] text-[#d5dde0]"><ChevronUp size={13} strokeWidth={2.5} /></button>
        </div>
      </div>
    </div>
    <div className="flex min-h-0 flex-1 overflow-hidden">
      <div className="w-[94px] shrink-0 bg-[#31444d]">
        {tracks.map((t, i) => (
          <section key={i} className={rowHeight(i)}>
            <div className={"flex h-full flex-col justify-between overflow-hidden rounded-r border-t border-black/20 px-0.5 " + t.head}>
              <h2 className={"shrink-0 font-['Roboto_Condensed','Roboto',sans-serif] text-[13px] leading-4 font-medium " + (i < 7 ? "text-[#eef0fb]" : i < 15 ? "text-[#10242a]" : "text-[#3f7d5c]")}>Track {i + 1}</h2>
              {i < 16 && (
                <div className="flex items-end justify-between pr-1 pb-1">
                  <span className="flex gap-0.5 pb-px pl-2.5">
                    <i className="h-0.5 w-0.5 bg-black/40" />
                    <i className="h-0.5 w-0.5 bg-black/40" />
                    <i className="h-0.5 w-0.5 bg-black/40" />
                  </span>
                  <button aria-label={`Mute track ${i + 1}`} className="h-2 w-2 rounded-full border border-[#203a12] bg-[#b4ee62] ring-1 ring-[#86c95e]/50" />
                </div>
              )}
            </div>
          </section>
        ))}
      </div>
      <div className="w-2.5 shrink-0 bg-[#3f484d]">
        {tracks.map((_, i) => (
          <div key={i} className={rowHeight(i) + " border-t border-[#232a2e]"}>
            {i === 14 && <div className="h-full border border-[#b3cf4a]" />}
          </div>
        ))}
      </div>
      <div className="relative min-w-0 flex-1 overflow-hidden bg-[repeating-linear-gradient(90deg,#0c0c0c_0_26px,#121212_26px_52px)]">
        <div className="absolute top-0 bottom-0 w-4 bg-linear-to-r from-transparent to-[#3f6310]" style={{ left: 280 }} />
        {tracks.map((t, i) => (
          <div key={i} className={"relative border-t border-black " + rowHeight(i)}>
            {t.clips.map((c) => (
              <Clip key={c[0]} data={c} body={t.body} />
            ))}
          </div>
        ))}
        <div className="absolute top-0 bottom-0 w-px bg-[#95cf45]" style={{ left: 296 }} />
      </div>
      <div className="flex w-5 shrink-0 flex-col justify-between bg-[#414a4e] text-[#d5dde0]">
        <div className="flex h-[30px] items-center justify-center border border-[#7a8488] bg-[#636d71]"><span className="h-1 w-1.5 border-y border-[#99a3a7]" /></div>
        <button aria-label="Scroll down" className="flex h-[18px] items-center justify-center border border-[#6c767a] bg-[#566064]"><ChevronDown size={13} strokeWidth={2.5} /></button>
      </div>
    </div>
  </main>
);

export default function App() {
  return (
    <div className="relative flex h-screen flex-col overflow-hidden border-b-2 border-black bg-[#4a5256]">
      <Header />
      <TitleBar />
      <div className="flex min-h-0 flex-1 pl-2">
        <Browser />
        <Playlist />
      </div>
      <div className="absolute top-[511px] right-1.5 flex w-[18px] flex-col items-center rounded bg-[#0c0d0e] py-0.5 text-white">
        <span className="font-['Roboto',sans-serif] text-[6px] leading-[7px]">00:00</span>
        <span className="mt-0.5 flex h-2.5 w-2.5 items-center justify-center rounded-full border border-[#e2493f]"><span className="h-1.5 w-1.5 rounded-full bg-[#f0483d]" /></span>
        <span className="mt-0.5 font-['Noto_Sans',sans-serif] text-[13px] leading-4 [writing-mode:vertical-rl]">screen rec</span>
      </div>
      <svg viewBox="0 0 12 18" className="absolute top-[88px] left-[714px] h-[18px] w-3">
        <path d="M0.500 0.500v14l3.500-3 2.500 5.500 2-1-2.500-5h5z" fill="#fff" stroke="#222" />
      </svg>
    </div>
  );
}
